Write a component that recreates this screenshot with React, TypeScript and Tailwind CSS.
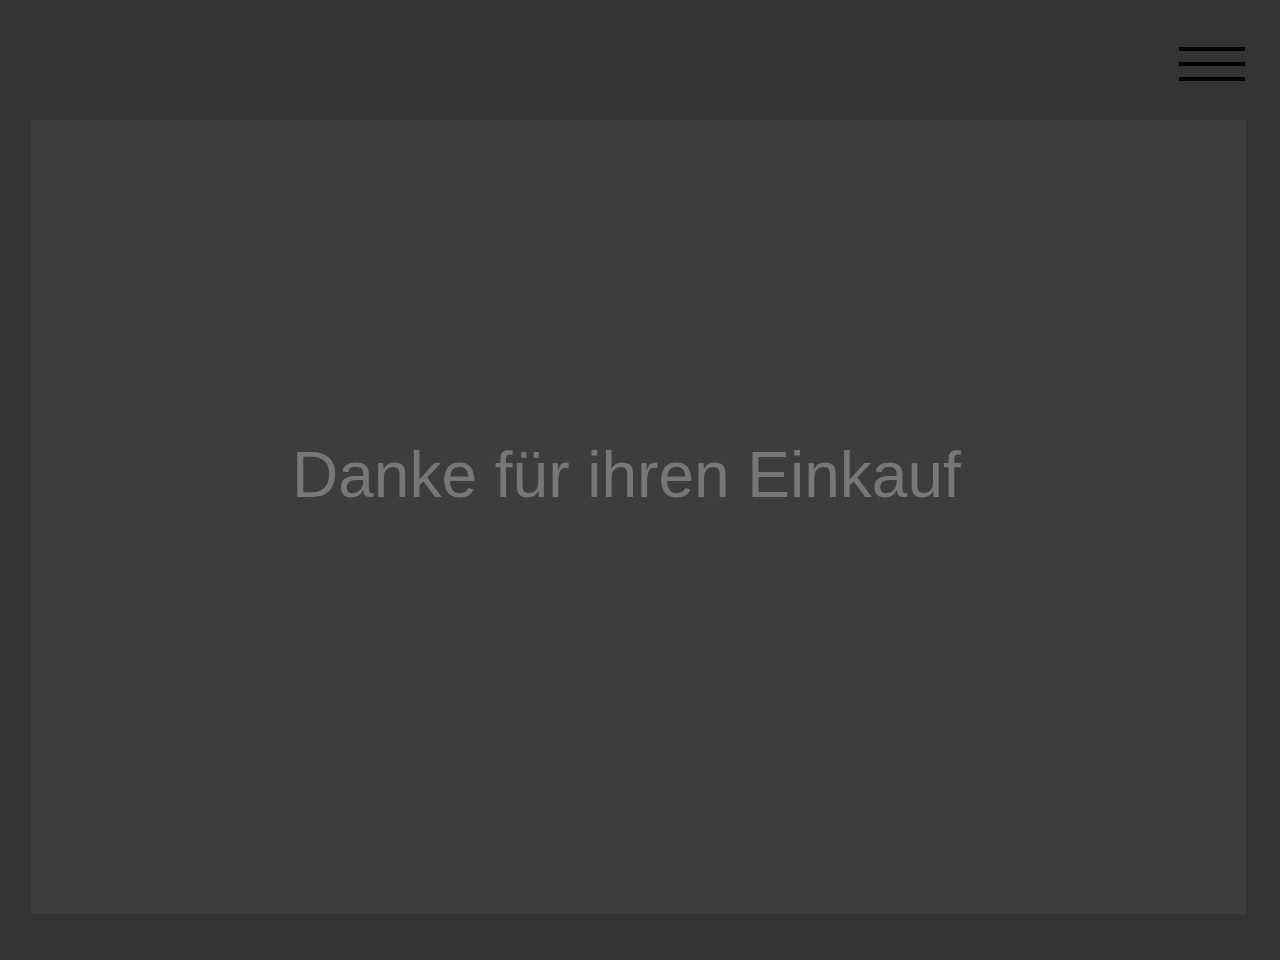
export default function App() {
  return (
    <div className="min-h-[960px] w-full bg-[#333333] font-['Liberation_Sans',Arial,sans-serif]">
      <header className="flex h-[120px] items-start justify-end pr-[35px] pt-[47px]">
        <button aria-label="Menü" className="flex w-[66px] flex-col gap-[11px]">
          <span className="block h-[4px] w-full bg-black" />
          <span className="block h-[4px] w-full bg-black" />
          <span className="block h-[4px] w-full bg-black" />
        </button>
      </header>
      <main className="ml-[31px] h-[794px] w-[1215px] bg-[#3d3d3d] pl-[261px] pt-[319px]">
        <h1 className="text-[64px] leading-[73px] text-[#777777]">Danke für ihren Einkauf</h1>
      </main>
    </div>
  );
}
